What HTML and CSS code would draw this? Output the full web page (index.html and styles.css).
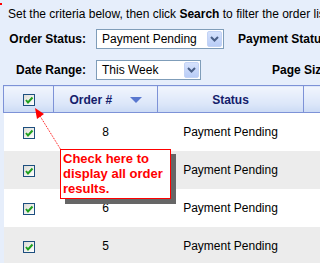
FILE: index.html
```html
<!DOCTYPE html>
<html lang="en">
  <head>
    <meta charset="UTF-8" />
    <title>Orders</title>
    <link rel="stylesheet" href="styles.css">
  </head>
  <body>
    <p class="intro">Set the criteria below, then click <b>Search</b> to filter the order list.</p>

    <div class="filters">
      <label class="label">Order Status:</label>
      <div class="select wide">
        <span class="select-text">Payment Pending</span>
        <span class="select-btn">
          <svg width="9" height="6" viewBox="0 0 9 6"><path d="M1 1 L4.5 4.5 L8 1" fill="none" stroke="#4a5f86" stroke-width="2"/></svg>
        </span>
      </div>
      <label class="label label-right">Payment Status:</label>

      <label class="label">Date Range:</label>
      <div class="select narrow">
        <span class="select-text">This Week</span>
        <span class="select-btn">
          <svg width="9" height="6" viewBox="0 0 9 6"><path d="M1 1 L4.5 4.5 L8 1" fill="none" stroke="#4a5f86" stroke-width="2"/></svg>
        </span>
      </div>
      <label class="label label-right">Page Size:</label>
    </div>

    <table class="orders">
      <colgroup>
        <col class="col-check" />
        <col class="col-order" />
        <col class="col-status" />
        <col class="col-rest" />
      </colgroup>
      <thead>
        <tr>
          <th><span class="check"><svg width="10" height="10" viewBox="0 0 10 10"><path d="M2 5 L4 7.5 L8.5 2.5" fill="none" stroke="#1fa01f" stroke-width="2"/></svg></span></th>
          <th>Order # <span class="sort"></span></th>
          <th>Status</th>
          <th></th>
        </tr>
      </thead>
      <tbody>
        <tr>
          <td><span class="check"><svg width="10" height="10" viewBox="0 0 10 10"><path d="M2 5 L4 7.5 L8.5 2.5" fill="none" stroke="#1fa01f" stroke-width="2"/></svg></span></td>
          <td>8</td>
          <td>Payment Pending</td>
          <td></td>
        </tr>
        <tr class="alt">
          <td><span class="check"><svg width="10" height="10" viewBox="0 0 10 10"><path d="M2 5 L4 7.5 L8.5 2.5" fill="none" stroke="#1fa01f" stroke-width="2"/></svg></span></td>
          <td>7</td>
          <td>Payment Pending</td>
          <td></td>
        </tr>
        <tr>
          <td><span class="check"><svg width="10" height="10" viewBox="0 0 10 10"><path d="M2 5 L4 7.5 L8.5 2.5" fill="none" stroke="#1fa01f" stroke-width="2"/></svg></span></td>
          <td>6</td>
          <td>Payment Pending</td>
          <td></td>
        </tr>
        <tr class="alt">
          <td><span class="check"><svg width="10" height="10" viewBox="0 0 10 10"><path d="M2 5 L4 7.5 L8.5 2.5" fill="none" stroke="#1fa01f" stroke-width="2"/></svg></span></td>
          <td>5</td>
          <td>Payment Pending</td>
          <td></td>
        </tr>
      </tbody>
    </table>

    <!-- annotation overlay -->
    <svg class="arrow" width="320" height="263" viewBox="0 0 320 263">
      <rect x="0" y="3" width="2" height="2" fill="#ff0000"/>
      <line x1="40" y1="116" x2="61" y2="150" stroke="#ff0000" stroke-width="1" stroke-dasharray="1 1"/>
      <polygon points="35,108 44,114 37,119" fill="#ff0000"/>
    </svg>
    <div class="callout">Check here to<br />display all order<br />results.</div>
  </body>
</html>
```

FILE: styles.css
```css
html,
body {
  overflow: hidden;
}

body {
  margin: 0;
  width: 320px;
  height: 263px;
  position: relative;
  font-family: "Liberation Sans", Arial, sans-serif;
  font-size: 12px;
  color: #000;
  background-color: #e6eefb;
}

.intro {
  margin: 0;
  padding: 7px 0 0 8px;
  line-height: 14px;
  height: 14px;
  white-space: nowrap;
}

.filters {
  display: grid;
  grid-template-columns: 86px 128px 98px;
  grid-template-rows: 20px 20px;
  column-gap: 10px;
  row-gap: 11px;
  margin-top: 8px;
  align-items: center;
  white-space: nowrap;
}

.label {
  font-weight: bold;
  text-align: right;
}

.label-right {
  text-align: right;
}

.select {
  display: flex;
  align-items: stretch;
  height: 20px;
  box-sizing: border-box;
  border: 1px solid #7f9db9;
  background-color: #fff;
}

.select.wide {
  width: 128px;
}

.select.narrow {
  width: 105px;
}

.select-text {
  flex: 1;
  padding-left: 5px;
  line-height: 18px;
}

.select-btn {
  width: 15px;
  margin: 1px;
  display: flex;
  align-items: center;
  justify-content: center;
  box-sizing: border-box;
  border: 1px solid #c3d3f5;
  border-radius: 2px;
  background: linear-gradient(#d6e2fc, #b9cdf7);
}

.orders {
  margin: 5px 0 0 3px;
  border-collapse: collapse;
  table-layout: fixed;
  width: 400px;
}

.col-check {
  width: 50px;
}

.col-order {
  width: 104px;
}

.col-status {
  width: 146px;
}

.orders th {
  height: 25px;
  padding: 1px 0 0;
  border: 1px solid #7d92d7;
  background: linear-gradient(#f1f5fd, #dbe6f9 70%, #cbdaf5);
  color: #14206b;
  font-weight: bold;
  text-align: center;
}

.orders td {
  height: 38px;
  padding: 0;
  text-align: center;
  background-color: #fff;
}

.orders tr.alt td {
  background-color: #ececec;
}

.check {
  display: inline-flex;
  align-items: center;
  justify-content: center;
  width: 12px;
  height: 12px;
  box-sizing: border-box;
  border: 1px solid #1d4f7f;
  background: linear-gradient(135deg, #dcdcd6, #ffffff);
  vertical-align: middle;
}

.sort {
  display: inline-block;
  width: 0;
  height: 0;
  margin-left: 14px;
  border-left: 6px solid transparent;
  border-right: 6px solid transparent;
  border-top: 6px solid #5877cf;
  vertical-align: middle;
}

.arrow {
  position: absolute;
  left: 0;
  top: 0;
  pointer-events: none;
}

.callout {
  position: absolute;
  left: 60px;
  top: 149px;
  width: 111px;
  height: 50px;
  box-sizing: border-box;
  padding: 1px 0 0 2px;
  border: 1px solid #ff0000;
  background-color: #fff;
  box-shadow: 5px 5px 0 #666;
  color: #ff0000;
  font-size: 13px;
  font-weight: bold;
  line-height: 15px;
}
```
